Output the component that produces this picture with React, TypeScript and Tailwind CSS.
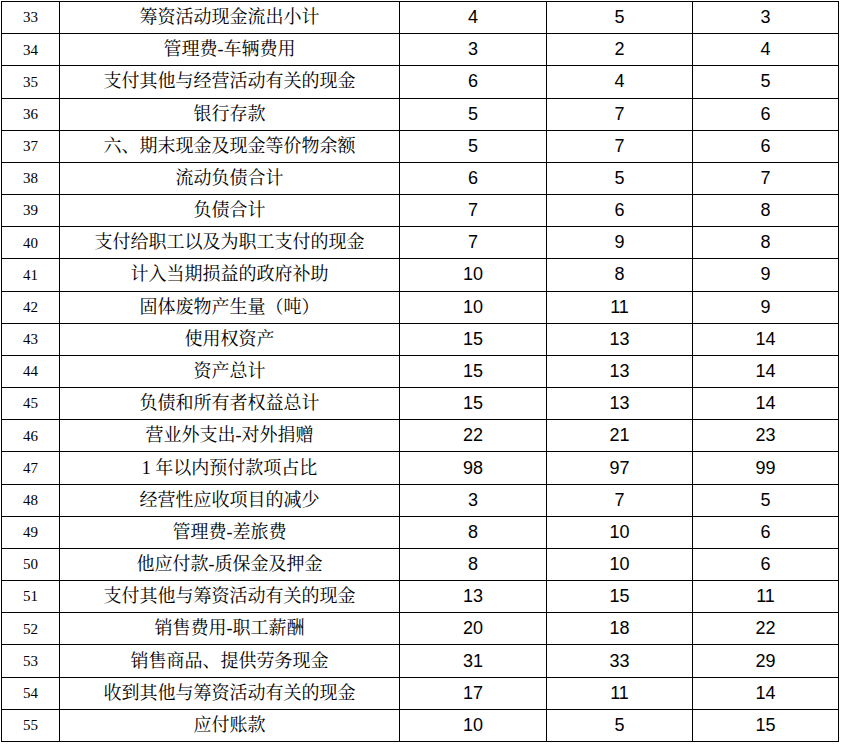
const rows: [number, string, number, number, number][] = [
  [33, '筹资活动现金流出小计', 4, 5, 3],
  [34, '管理费-车辆费用', 3, 2, 4],
  [35, '支付其他与经营活动有关的现金', 6, 4, 5],
  [36, '银行存款', 5, 7, 6],
  [37, '六、期末现金及现金等价物余额', 5, 7, 6],
  [38, '流动负债合计', 6, 5, 7],
  [39, '负债合计', 7, 6, 8],
  [40, '支付给职工以及为职工支付的现金', 7, 9, 8],
  [41, '计入当期损益的政府补助', 10, 8, 9],
  [42, '固体废物产生量（吨）', 10, 11, 9],
  [43, '使用权资产', 15, 13, 14],
  [44, '资产总计', 15, 13, 14],
  [45, '负债和所有者权益总计', 15, 13, 14],
  [46, '营业外支出-对外捐赠', 22, 21, 23],
  [47, '1 年以内预付款项占比', 98, 97, 99],
  [48, '经营性应收项目的减少', 3, 7, 5],
  [49, '管理费-差旅费', 8, 10, 6],
  [50, '他应付款-质保金及押金', 8, 10, 6],
  [51, '支付其他与筹资活动有关的现金', 13, 15, 11],
  [52, '销售费用-职工薪酬', 20, 18, 22],
  [53, '销售商品、提供劳务现金', 31, 33, 29],
  [54, '收到其他与筹资活动有关的现金', 17, 11, 14],
  [55, '应付账款', 10, 5, 15],
];

const cell = 'bg-white flex items-center justify-center text-black whitespace-nowrap';
const num = `${cell} font-['Liberation_Sans',Arial,sans-serif] text-[18px]`;

export default function App() {
  return (
    <div className="w-[841px] h-[744px] bg-white pt-px pl-px">
      <div className="w-[838px] h-[741px] bg-black p-px grid gap-px grid-cols-[57px_339px_146px_145px_145px] grid-rows-[repeat(23,minmax(0,1fr))]">
        {rows.map(([id, name, a, b, c]) => (
          <div key={id} className="contents">
            <div className={`${cell} font-['Liberation_Serif','Times_New_Roman',serif] text-[15px]`}>
              {id}
            </div>
            <div
              className={`${cell} font-['Liberation_Serif','Noto_Serif_CJK_SC','Noto_Sans_CJK_SC',serif] text-[18px]`}
            >
              {name}
            </div>
            <div className={num}>{a}</div>
            <div className={num}>{b}</div>
            <div className={num}>{c}</div>
          </div>
        ))}
      </div>
    </div>
  );
}
